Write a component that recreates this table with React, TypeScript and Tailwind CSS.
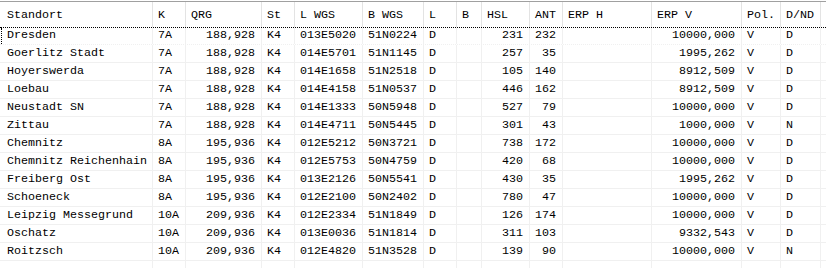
type Col = { title: string; w: string; right?: boolean };

const cols: Col[] = [
  { title: "Standort", w: "w-[153px]" },
  { title: "K", w: "w-[33px]" },
  { title: "QRG", w: "w-[76px]", right: true },
  { title: "St", w: "w-[33px]" },
  { title: "L WGS", w: "w-[68px]" },
  { title: "B WGS", w: "w-[61px]" },
  { title: "L", w: "w-[33px]" },
  { title: "B", w: "w-[25px]" },
  { title: "HSL", w: "w-[48px]", right: true },
  { title: "ANT", w: "w-[33px]", right: true },
  { title: "ERP H", w: "w-[89px]" },
  { title: "ERP V", w: "w-[90px]", right: true },
  { title: "Pol.", w: "w-[39px]" },
  { title: "D/ND", w: "w-[40px]" },
];

const rows: string[][] = [
  ["Dresden", "7A", "188,928", "K4", "013E5020", "51N0224", "D", "", "231", "232", "", "10000,000", "V", "D"],
  ["Goerlitz Stadt", "7A", "188,928", "K4", "014E5701", "51N1145", "D", "", "257", "35", "", "1995,262", "V", "D"],
  ["Hoyerswerda", "7A", "188,928", "K4", "014E1658", "51N2518", "D", "", "105", "140", "", "8912,509", "V", "D"],
  ["Loebau", "7A", "188,928", "K4", "014E4158", "51N0537", "D", "", "446", "162", "", "8912,509", "V", "D"],
  ["Neustadt SN", "7A", "188,928", "K4", "014E1333", "50N5948", "D", "", "527", "79", "", "10000,000", "V", "D"],
  ["Zittau", "7A", "188,928", "K4", "014E4711", "50N5445", "D", "", "301", "43", "", "1000,000", "V", "N"],
  ["Chemnitz", "8A", "195,936", "K4", "012E5212", "50N3721", "D", "", "738", "172", "", "10000,000", "V", "D"],
  ["Chemnitz Reichenhain", "8A", "195,936", "K4", "012E5753", "50N4759", "D", "", "420", "68", "", "10000,000", "V", "D"],
  ["Freiberg Ost", "8A", "195,936", "K4", "013E2126", "50N5541", "D", "", "430", "35", "", "1995,262", "V", "D"],
  ["Schoeneck", "8A", "195,936", "K4", "012E2100", "50N2402", "D", "", "780", "47", "", "10000,000", "V", "D"],
  ["Leipzig Messegrund", "10A", "209,936", "K4", "012E2334", "51N1849", "D", "", "126", "174", "", "10000,000", "V", "D"],
  ["Oschatz", "10A", "209,936", "K4", "013E0036", "51N1814", "D", "", "311", "103", "", "9332,543", "V", "D"],
  ["Roitzsch", "10A", "209,936", "K4", "012E4820", "51N3528", "D", "", "139", "90", "", "10000,000", "V", "N"],
];

export default function App() {
  return (
    <div className="h-[268px] w-[826px] overflow-hidden bg-white pt-px font-['Liberation_Mono','Courier_New',monospace] text-[11.67px] text-black">
      <div className="flex h-full flex-col border-t border-[#a0a0a0]">
        {/* header */}
        <div className="flex h-[25px] shrink-0">
          {cols.map((c) => (
            <div
              key={c.title}
              className={`${c.w} flex shrink-0 items-center whitespace-pre border-r border-[#e3e3e3] pt-[2px] ${c.title === "Standort" ? "pl-[7px]" : "pl-[5px]"}`}
            >
              {c.title}
            </div>
          ))}
        </div>

        {rows.map((r, i) => (
          <div
            key={r[0]}
            className={`relative flex h-[18px] shrink-0 border-b border-[#f0f0f0] ${i === 0 ? "border-t border-dotted border-t-black" : ""}`}
          >
            {i === 0 && <div className="absolute top-0 bottom-0 left-px border-l border-dotted border-black" />}
            {r.map((v, j) => (
              <div
                key={j}
                className={`${cols[j].w} flex shrink-0 items-center whitespace-pre border-r border-[#f0f0f0] ${cols[j].right ? "justify-end pr-[6px]" : j === 0 ? "pl-[7px]" : "pl-[5px]"}`}
              >
                {v}
              </div>
            ))}
          </div>
        ))}

        {/* empty filler below last row */}
        <div className="flex flex-1">
          {cols.map((c) => (
            <div key={c.title} className={`${c.w} shrink-0 border-r border-[#f0f0f0]`} />
          ))}
        </div>
      </div>
    </div>
  );
}
